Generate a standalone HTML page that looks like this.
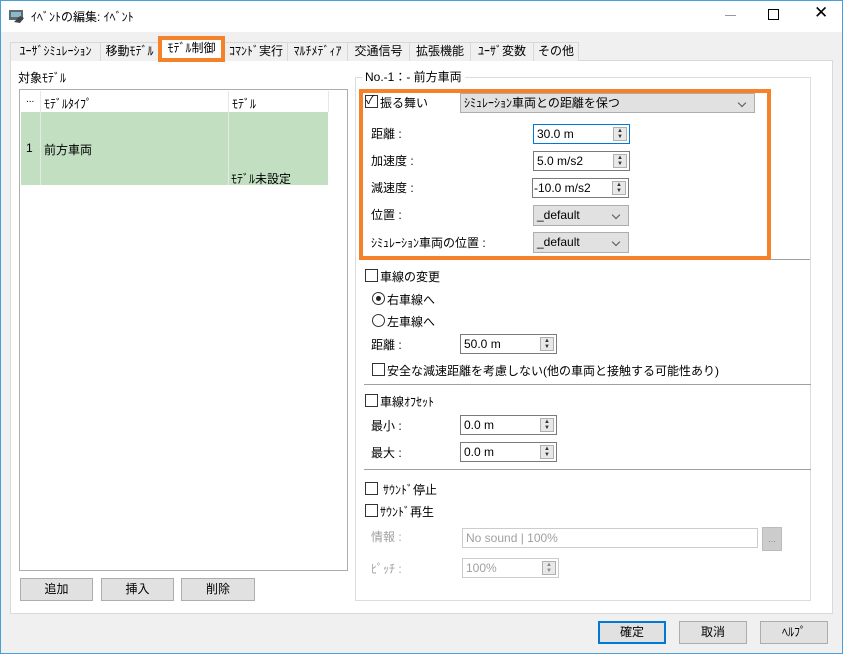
<!DOCTYPE html>
<html><head><meta charset="utf-8"><style>
*{box-sizing:border-box;margin:0;padding:0}
body{width:843px;height:654px;overflow:hidden;background:#f0f0f0;font-family:"Liberation Sans","Noto Sans CJK JP",sans-serif;font-size:12px;color:#000;position:relative}
.a{position:absolute;white-space:nowrap}
.win{position:absolute;left:0;top:0;width:843px;height:654px;border:1px solid #4a9fd8}
.tb{position:absolute;left:1px;top:1px;width:841px;height:31px;background:#fff}
.tab{position:absolute;top:42px;height:19px;border:1px solid #d9d9d9;border-bottom:none;background:#f0f0f0;text-align:center;line-height:17px;font-size:12px;white-space:nowrap;overflow:hidden}
.panel{position:absolute;left:10px;top:60px;width:823px;height:554px;background:#fff;border:1px solid #d9d9d9}
.btn{position:absolute;height:23px;background:#e1e1e1;border:1px solid #adadad;text-align:center;line-height:21px}
.fld{position:absolute;height:20px;background:#fff;border:1px solid #7a7a7a;padding-left:3px;line-height:18px}
.spin{position:absolute;right:2px;top:2px;width:14px;height:14px;background:#e8e8e8;border:1px solid #b0b0b0;font-size:6px;line-height:6px;text-align:center;color:#333}
.cmb{position:absolute;height:21px;background:#e1e1e1;border:1px solid #adadad;padding-left:3px;line-height:19px}
.cmb:after{content:"";position:absolute;right:9px;top:6px;width:5px;height:5px;border-right:1px solid #555;border-bottom:1px solid #555;transform:rotate(45deg)}
.cb{position:absolute;width:13px;height:13px;border:1px solid #333;background:#fff}
.sep{position:absolute;height:1px;background:#a0a0a0}
.g{color:#a0a0a0}
</style></head><body>
<div class="win"></div>
<div class="tb"></div>
<svg class="a" style="left:8px;top:8px" width="18" height="16"><rect x="1" y="2" width="14" height="10" fill="#5a6b72"/><rect x="3" y="4" width="10" height="5" fill="#8fb8c8"/><path d="M6 14 L12 8 L16 10 L12 15Z" fill="#444"/></svg>
<div class="a" style="left:31px;top:8px">ｲﾍﾞﾝﾄの編集: ｲﾍﾞﾝﾄ</div>
<div class="a" style="left:725px;top:15px;width:11px;height:1px;background:#999"></div>
<div class="a" style="left:768px;top:9px;width:11px;height:11px;border:1px solid #000"></div>
<div class="a" style="left:814px;top:3px;font-size:17px">✕</div>

<div class="panel"></div>
<div class="tab" style="left:10px;width:91px">ﾕｰｻﾞｼﾐｭﾚｰｼｮﾝ</div>
<div class="tab" style="left:100px;width:59px">移動ﾓﾃﾞﾙ</div>
<div class="tab" style="left:287px;width:61px">ﾏﾙﾁﾒﾃﾞｨｱ</div>
<div class="tab" style="left:224px;width:64px">ｺﾏﾝﾄﾞ実行</div>
<div class="tab" style="left:347px;width:63px">交通信号</div>
<div class="tab" style="left:409px;width:62px">拡張機能</div>
<div class="tab" style="left:470px;width:64px">ﾕｰｻﾞ変数</div>
<div class="tab" style="left:533px;width:46px">その他</div>
<div class="a" style="left:158px;top:36px;width:67px;height:26px;border:4px solid #f5822a;background:#fff;text-align:center;line-height:17px;font-size:12px">ﾓﾃﾞﾙ制御</div>

<div class="a" style="left:18px;top:69px">対象ﾓﾃﾞﾙ</div>
<div class="a" style="left:19px;top:89px;width:329px;height:482px;border:1px solid #adadad;background:#fff"></div>
<div class="a" style="left:21px;top:112px;width:307px;height:73px;background:#c2dfc2"></div>
<div class="a" style="left:40px;top:91px;width:1px;height:94px;background:#e8e8e8"></div>
<div class="a" style="left:228px;top:91px;width:1px;height:94px;background:#e8e8e8"></div>
<div class="a" style="left:328px;top:91px;width:1px;height:21px;background:#e8e8e8"></div>
<div class="a" style="left:26px;top:94px;font-size:10px">...</div>
<div class="a" style="left:44px;top:95px">ﾓﾃﾞﾙﾀｲﾌﾟ</div>
<div class="a" style="left:232px;top:95px">ﾓﾃﾞﾙ</div>
<div class="a" style="left:26px;top:141px">1</div>
<div class="a" style="left:44px;top:141px">前方車両</div>
<div class="a" style="left:231px;top:170px">ﾓﾃﾞﾙ未設定</div>
<div class="btn" style="left:20px;top:578px;width:73px">追加</div>
<div class="btn" style="left:101px;top:578px;width:73px">挿入</div>
<div class="btn" style="left:181px;top:578px;width:74px">削除</div>

<div class="a" style="left:355px;top:77px;width:456px;height:524px;border:1px solid #dcdcdc"></div>
<div class="a" style="left:362px;top:68px;background:#fff;padding:0 3px">No.-1：- 前方車両</div>

<div class="cb" style="left:365px;top:95px"></div><div class="a" style="left:366px;top:91px;font-size:12px">✓</div>
<div class="a" style="left:380px;top:94px">振る舞い</div>
<div class="cmb" style="left:460px;top:93px;width:295px;height:20px;line-height:18px">ｼﾐｭﾚｰｼｮﾝ車両との距離を保つ</div>
<div class="a" style="left:371px;top:125px">距離 :</div>
<div class="fld" style="left:533px;top:124px;width:97px;border-color:#0078d7">30.0 m<div class="spin">▲<br>▼</div></div>
<div class="a" style="left:371px;top:152px">加速度 :</div>
<div class="fld" style="left:533px;top:151px;width:97px">5.0 m/s2<div class="spin">▲<br>▼</div></div>
<div class="a" style="left:371px;top:179px">減速度 :</div>
<div class="fld" style="left:532px;top:178px;width:97px;padding-left:1px">-10.0 m/s2<div class="spin">▲<br>▼</div></div>
<div class="a" style="left:371px;top:206px">位置 :</div>
<div class="cmb" style="left:533px;top:205px;width:96px">_default</div>
<div class="a" style="left:371px;top:234px">ｼﾐｭﾚｰｼｮﾝ車両の位置 :</div>
<div class="cmb" style="left:533px;top:232px;width:96px">_default</div>
<div class="a" style="left:359px;top:89px;width:412px;height:171px;border:4px solid #f5822a"></div>
<div class="sep" style="left:771px;top:259px;width:39px"></div>

<div class="cb" style="left:365px;top:269px"></div><div class="a" style="left:380px;top:268px">車線の変更</div>
<div class="a" style="left:372px;top:292px;width:13px;height:13px;border:1px solid #333;border-radius:50%;background:#fff"><div style="position:absolute;left:3px;top:3px;width:5px;height:5px;border-radius:50%;background:#222"></div></div>
<div class="a" style="left:387px;top:291px">右車線へ</div>
<div class="a" style="left:372px;top:314px;width:13px;height:13px;border:1px solid #333;border-radius:50%;background:#fff"></div>
<div class="a" style="left:387px;top:313px">左車線へ</div>
<div class="a" style="left:371px;top:336px">距離 :</div>
<div class="fld" style="left:460px;top:334px;width:97px">50.0 m<div class="spin">▲<br>▼</div></div>
<div class="cb" style="left:372px;top:363px"></div><div class="a" style="left:387px;top:362px">安全な減速距離を考慮しない(他の車両と接触する可能性あり)</div>
<div class="sep" style="left:364px;top:384px;width:447px"></div>

<div class="cb" style="left:365px;top:394px"></div><div class="a" style="left:380px;top:393px">車線ｵﾌｾｯﾄ</div>
<div class="a" style="left:371px;top:417px">最小 :</div>
<div class="fld" style="left:460px;top:415px;width:97px">0.0 m<div class="spin">▲<br>▼</div></div>
<div class="a" style="left:371px;top:444px">最大 :</div>
<div class="fld" style="left:460px;top:442px;width:97px">0.0 m<div class="spin">▲<br>▼</div></div>
<div class="sep" style="left:364px;top:469px;width:447px"></div>

<div class="cb" style="left:365px;top:482px"></div><div class="a" style="left:383px;top:481px">ｻｳﾝﾄﾞ停止</div>
<div class="cb" style="left:365px;top:504px"></div><div class="a" style="left:380px;top:503px">ｻｳﾝﾄﾞ再生</div>
<div class="a g" style="left:371px;top:528px">情報 :</div>
<div class="fld g" style="left:462px;top:528px;width:296px;border-color:#ccc">No sound | 100%</div>
<div class="a" style="left:762px;top:527px;width:20px;height:24px;background:#ccc;border:1px solid #bbb;color:#888;text-align:center;font-size:9px;line-height:22px">...</div>
<div class="a g" style="left:371px;top:560px">ﾋﾟｯﾁ :</div>
<div class="fld g" style="left:462px;top:558px;width:97px;border-color:#ccc">100%<div class="spin" style="color:#888">▲<br>▼</div></div>

<div class="btn" style="left:598px;top:621px;width:68px;border:2px solid #0078d7;line-height:19px">確定</div>
<div class="btn" style="left:679px;top:621px;width:68px">取消</div>
<div class="btn" style="left:760px;top:621px;width:68px">ﾍﾙﾌﾟ</div>
</body></html>
